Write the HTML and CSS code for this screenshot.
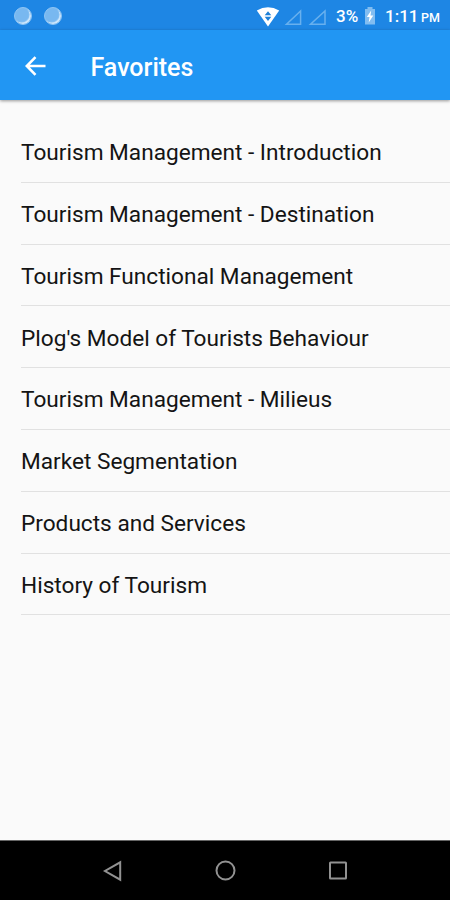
FILE: index.html
```html
<!DOCTYPE html>
<html lang="en">
<head>
<meta charset="utf-8">
<title>Favorites</title>
<link rel="stylesheet" href="styles.css">
</head>
<body>
<div class="screen">
  <div class="status">
    <div class="notices"><span class="dot"></span><span class="dot"></span></div>
    <svg class="signals" width="72" height="24" viewBox="0 0 72 24">
      <path d="M.8 6.600Q12 0 23.200 6.600L12 22.500Z" fill="#fff"/>
      <path d="M12 7.200l3.300 4H8.700zM12 17l-3.300-4.300h6.600z" fill="#1e80d8"/>
      <path d="M44.600 7v13.300H30.500ZM69 7v13.300H54.500Z" fill="none" stroke="#68b0ee" stroke-width="1.500"/>
    </svg>
    <span class="percent">3%</span>
    <svg class="battery" width="12" height="20" viewBox="0 0 12 20">
      <path d="M3.500 1h5v2H11v15.500H1V3h2.500z" fill="#82bdf1"/>
      <path d="M7.200 4.500L2.800 11h2.700l-.8 5.500L9.300 9.500H6.500z" fill="#fff"/>
    </svg>
    <span class="time">1:11</span><span class="meridiem">PM</span>
  </div>
  <header class="appbar">
    <svg class="back" width="22" height="20" viewBox="0 0 22 20">
      <path d="M20.500 10H2M10.500 1.200L1.800 10l8.700 8.800" fill="none" stroke="#fff" stroke-width="2.600"/>
    </svg>
    <h1>Favorites</h1>
  </header>
  <ul class="list">
    <li><span>Tourism Management - Introduction</span></li>
    <li><span>Tourism Management - Destination</span></li>
    <li><span>Tourism Functional Management</span></li>
    <li><span>Plog's Model of Tourists Behaviour</span></li>
    <li><span>Tourism Management - Milieus</span></li>
    <li><span>Market Segmentation</span></li>
    <li><span>Products and Services</span></li>
    <li><span>History of Tourism</span></li>
  </ul>
  <nav class="navbar">
    <svg width="22" height="22" viewBox="0 0 22 22"><path d="M18.200 2.300v17.400L3 11Z"/></svg>
    <svg width="22" height="22" viewBox="0 0 22 22"><circle cx="10.500" cy="10.500" r="9"/></svg>
    <svg width="22" height="22" viewBox="0 0 22 22"><rect x="3" y="2.500" width="16" height="16" rx=".5"/></svg>
  </nav>
</div>
</body>
</html>
```
FILE: styles.css
```css
* { box-sizing: border-box; }
body { margin: 0; font-family: Roboto, sans-serif; }
.screen {
  width: 450px;
  height: 900px;
  display: flex;
  flex-direction: column;
  overflow: hidden;
  background: #fafafa;
}
.status {
  height: 30px;
  display: flex;
  align-items: center;
  padding: 2px 10px 0 14px;
  background: #1e86e4;
  color: #fff;
  font-size: 17px;
  font-weight: 500;
  white-space: nowrap;
}
.notices { display: flex; gap: 12px; margin-right: auto; }
.dot {
  width: 18px;
  height: 18px;
  border-radius: 50%;
  background: #78b8f0;
  border: 1px solid #8fc5f4;
  box-shadow: inset -1.500px -1.500px 1px #d2e9fc;
}
.signals { margin-right: 8px; }
.percent { width: 28px; }
.battery { margin-right: 9px; }
.time { width: 36px; }
.meridiem { width: 19px; font-size: 12.500px; padding-top: 3px; }
.appbar {
  height: 70px;
  flex: none;
  display: flex;
  align-items: center;
  padding: 5px 0 0 25px;
  background: #2196f3;
  box-shadow: 0 1px 3px rgba(0, 0, 0, .4);
}
.back { margin: 0 43.500px 3px 0; }
h1 {
  margin: 0;
  color: #fff;
  font-size: 25px;
  line-height: 30px;
  font-weight: 500;
}
.list { flex: 1; margin: 0; padding: 21px 0 0 21px; list-style: none; }
.list li {
  height: 61.800px;
  display: flex;
  align-items: center;
  padding-top: 2.500px;
  border-bottom: 1.500px solid #e1e1e1;
  color: #141414;
  font-size: 22.630px;
}
.navbar {
  height: 60px;
  flex: none;
  display: flex;
  justify-content: space-between;
  align-items: center;
  padding: 0 101px 0 102px;
  border-top: 1px solid #666;
  background: #000;
}
.navbar svg { fill: none; stroke: #929292; stroke-width: 2; }
```
